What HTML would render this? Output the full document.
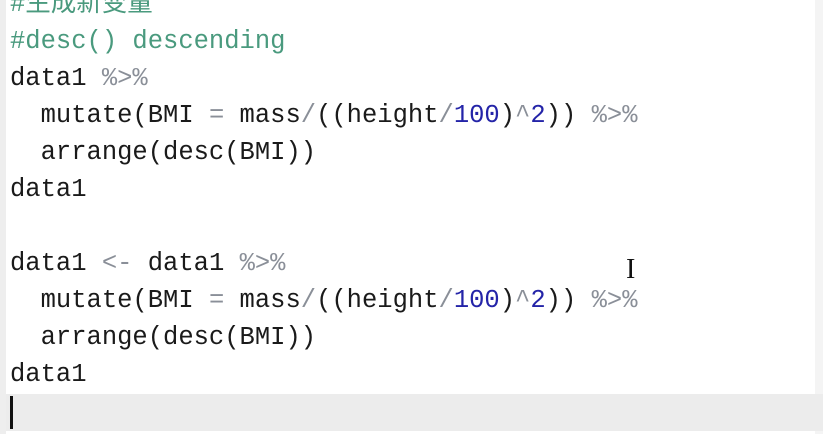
<!DOCTYPE html>
<html><head><meta charset="utf-8"><style>
html,body{margin:0;padding:0;width:823px;height:434px;overflow:hidden;background:#fff;}
.ed{position:absolute;left:0;top:0;width:823px;height:434px;}
.lb{position:absolute;left:0;top:0;width:6px;height:434px;background:#eeeeee;}
.rb{position:absolute;right:0;top:0;width:8px;height:434px;background:#f4f4f4;}
.hl{position:absolute;left:6px;top:394px;width:817px;height:37px;background:#ececec;}
.cur{position:absolute;left:10px;top:396px;width:3px;height:33px;background:#111;}
pre{position:absolute;left:10px;top:-14px;margin:0;font-family:"Liberation Mono","Noto Sans CJK SC",monospace;font-size:25.5px;line-height:37px;color:#1a1a1a;}
.c{color:#4a9a7e;}
.o{color:#8a8f98;}
.n{color:#2424a8;}
.ib{position:absolute;left:626px;top:254px;font-family:"Liberation Serif",serif;font-size:28px;color:#111;}
</style></head><body><div class="ed">
<div class="lb"></div><div class="rb"></div><div class="hl"></div><div class="cur"></div>
<pre><span class="c">#生成新变量</span>
<span class="c">#desc() descending</span>
data1 <span class="o">%&gt;%</span>
  mutate(BMI <span class="o">=</span> mass<span class="o">/</span>((height<span class="o">/</span><span class="n">100</span>)<span class="o">^</span><span class="n">2</span>)) <span class="o">%&gt;%</span>
  arrange(desc(BMI))
data1

data1 <span class="o">&lt;-</span> data1 <span class="o">%&gt;%</span>
  mutate(BMI <span class="o">=</span> mass<span class="o">/</span>((height<span class="o">/</span><span class="n">100</span>)<span class="o">^</span><span class="n">2</span>)) <span class="o">%&gt;%</span>
  arrange(desc(BMI))
data1
</pre>
<div class="ib">I</div>
</div></body></html>
